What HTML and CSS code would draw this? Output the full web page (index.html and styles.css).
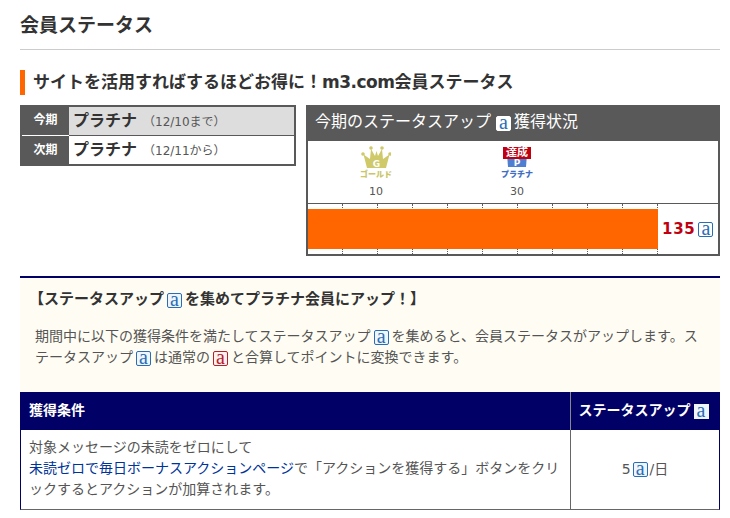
FILE: index.html
```html
<!DOCTYPE html>
<html lang="ja">
<head>
<meta charset="utf-8">
<title>会員ステータス</title>
<link rel="stylesheet" href="styles.css">
</head>
<body>
<main class="page">
  <h1 class="title">会員ステータス</h1>
  <h2 class="subtitle">サイトを活用すればするほどお得に！<span class="latin">m3.com</span>会員ステータス</h2>

  <section class="status-row">
    <div class="periods">
      <div class="period current">
        <div class="period-label">今期</div>
        <div class="period-value"><b>プラチナ</b><span class="period-date">（12/10まで）</span></div>
      </div>
      <div class="period">
        <div class="period-label">次期</div>
        <div class="period-value"><b>プラチナ</b><span class="period-date">（12/11から）</span></div>
      </div>
    </div>

    <div class="progress">
      <div class="progress-head">今期のステータスアップ<span class="a a-head">a</span>獲得状況</div>
      <div class="milestones">
        <div class="milestone">
          <svg class="crown" viewBox="0 0 30 23" aria-hidden="true">
            <g fill="#cfc969">
              <circle cx="2" cy="8" r="1.8"/><circle cx="10" cy="2" r="1.8"/><circle cx="21" cy="2" r="1.8"/><circle cx="29" cy="8" r="1.8"/>
              <path d="M2.5 8.5 L9 13 L10 3 L14 10 L15.5 5 L17 10 L21 3 L22 13 L28.5 8.5 L25 22 L6 22 Z"/>
            </g>
            <text x="15.5" y="20.5" class="crown-letter">G</text>
          </svg>
          <div class="rank rank-gold">ゴールド</div>
          <div class="points">10</div>
        </div>
        <div class="milestone">
          <div class="crown-wrap">
            <svg class="crown" viewBox="0 0 30 23" aria-hidden="true">
              <g fill="#4f7fd0">
                <circle cx="10" cy="1.5" r="1.5"/><circle cx="20" cy="1.5" r="1.5"/>
                <path d="M5 8 L25 8 L24 21 L6 21 Z"/>
              </g>
              <text x="15" y="20" class="crown-letter">P</text>
            </svg>
            <span class="achieved">達成</span>
          </div>
          <div class="rank rank-plat">プラチナ</div>
          <div class="points">30</div>
        </div>
      </div>
      <div class="track">
        <div class="ticks">
          <i></i><i></i><i></i><i></i><i></i><i></i><i></i><i></i><i></i><i></i><i class="tick-last"></i>
        </div>
        <div class="bar-line">
          <div class="bar" style="width:350px"></div>
          <span class="bar-value">135</span><span class="a a-track">a</span>
        </div>
      </div>
    </div>
  </section>

  <section class="info">
    <h3 class="info-head"><span class="bracket">【</span>ステータスアップ<span class="a">a</span>を集めてプラチナ会員にアップ！】</h3>
    <p class="info-text">期間中に以下の獲得条件を満たしてステータスアップ<span class="a">a</span>を集めると、会員ステータスがアップします。ステータスアップ<span class="a">a</span>は通常の<span class="a a-red">a</span>と合算してポイントに変換できます。</p>
  </section>

  <section class="conditions">
    <div class="cond-head cond-main">獲得条件</div>
    <div class="cond-head cond-side">ステータスアップ<span class="a a-th">a</span></div>
    <div class="cond-cell cond-main">対象メッセージの未読をゼロにして<br><a href="#">未読ゼロで毎日ボーナスアクションページ</a>で「アクションを獲得する」ボタンをクリックするとアクションが加算されます。</div>
    <div class="cond-cell cond-side cond-amount">5<span class="a">a</span>/日</div>
  </section>
</main>
</body>
</html>
```
FILE: styles.css
```css
* { box-sizing: border-box; }
html, body { margin: 0; padding: 0; background: #fff; }
body {
  font-family: "DejaVu Sans", "Noto Sans CJK JP", sans-serif;
  font-size: 14px;
  color: #555;
}
.page { width: 730px; padding: 0 10px 0 20px; }

.title {
  margin: 0;
  height: 50px;
  padding-top: 11px;
  font-size: 19px;
  line-height: 28px;
  font-weight: 700;
  color: #333;
  border-bottom: 1px solid #ccc;
}
.subtitle {
  margin: 20px 0 10px;
  height: 25px;
  padding-left: 8px;
  border-left: 5px solid #f60;
  font-size: 17px;
  line-height: 25px;
  font-weight: 700;
  color: #333;
  white-space: nowrap;
}
.latin { letter-spacing: -.5px; }

.status-row { display: flex; align-items: flex-start; gap: 10px; }

.periods { width: 276px; border: 2px solid #595959; }
.period { display: flex; height: 28px; }
.period.current { height: 29px; border-bottom: 1px solid #595959; }
.period-label {
  width: 47px;
  background: #595959;
  color: #fff;
  font-size: 12px;
  font-weight: 700;
  line-height: 28px;
  text-align: center;
}
.period.current .period-label { border-bottom: 1px solid #fff; line-height: 26px; height: 29px; }
.period-value { flex: 1; padding-left: 4px; line-height: 28px; white-space: nowrap; }
.period.current .period-value { background: #ddd; line-height: 27px; }
.period-value b { font-size: 16px; color: #333; }
.period-date { font-size: 12px; color: #555; margin-left: 6px; }

.progress { width: 414px; border: 2px solid #595959; border-top: 0; }
.progress-head {
  margin: 0 -2px;
  height: 36px;
  padding-left: 9px;
  background: #595959;
  color: #fff;
  font-size: 16px;
  line-height: 34px;
}
.milestones {
  display: flex;
  gap: 71px;
  height: 63px;
  padding: 5px 0 0 33px;
  border-bottom: 1px solid #595959;
}
.milestone { width: 70px; text-align: center; }
.crown { display: block; width: 30px; height: 23px; margin: 0 auto; }
.crown-wrap { position: relative; }
.crown-letter { font: 700 9px "DejaVu Sans", sans-serif; fill: #fff; text-anchor: middle; }
.achieved {
  position: absolute;
  left: 21px;
  top: 1px;
  width: 28px;
  height: 12px;
  background: #c00010;
  color: #fff;
  font-size: 11px;
  font-weight: 700;
  line-height: 12px;
}
.rank { font-size: 8px; font-weight: 900; line-height: 12px; white-space: nowrap; }
.rank-gold { color: #c9c568; }
.rank-plat { color: #3f6fc4; }
.points { font-size: 11px; line-height: 22px; color: #555; }

.track { position: relative; height: 50px; }
.ticks { display: flex; height: 100%; }
.ticks i { width: 35px; border-right: 1px dotted #595959; }
.ticks .tick-last { flex: 1; border-right: 0; }
.bar-line { position: absolute; left: 0; top: 5px; right: 0; display: flex; align-items: center; height: 40px; }
.bar { height: 40px; background: #f60; }
.bar-value { margin-left: 4px; font-size: 15px; font-weight: 700; color: #c00010; letter-spacing: .7px; }

.a {
  display: inline-block;
  width: 15px;
  height: 15px;
  margin: 0 3px;
  border: 1px solid #2a6db5;
  border-radius: 2px;
  background: #eef6fc;
  color: #2a6db5;
  font: 400 20px/10px "Liberation Serif", serif;
  text-align: center;
  vertical-align: -2px;
}
.a-head { margin: 0 3px 0 5px; background: #fff; border-color: #fff; }
.a-red { border-color: #b5202a; background: #fdf0f0; color: #b5202a; }
.a-track { background: #fff; margin: 0 0 0 3px; }
.a-th { background: #eef6fc; border-color: #eef6fc; border-radius: 0; margin: 0 0 0 3px; }

.info {
  margin-top: 20px;
  height: 116px;
  padding: 0 15px;
  border-top: 2px solid #006;
  background: #fffdf3;
}
.info-head {
  margin: 0;
  padding-top: 10px;
  font-size: 15px;
  line-height: 22px;
  font-weight: 700;
  color: #333;
}
.bracket { display: inline-block; width: 9px; text-indent: -6px; }
.info-text { margin: 16px 0 0; line-height: 21px; }

.conditions { display: grid; grid-template-columns: 550px 150px; }
.cond-head {
  height: 38px;
  background: #006;
  color: #fff;
  font-weight: 700;
  line-height: 36px;
}
.cond-head.cond-main { padding-left: 9px; }
.cond-head.cond-side { border-left: 1px solid #888; padding-right: 4px; text-align: center; white-space: nowrap; }
.cond-cell { height: 80px; border-bottom: 1px solid #666; line-height: 21px; padding: 7px 8px 0; }
.cond-cell.cond-main { border-left: 1px solid #006; }
.cond-cell.cond-side { border-left: 1px solid #666; border-right: 1px solid #006; }
.cond-amount { display: flex; align-items: center; justify-content: center; padding: 0; }
.cond-amount .a { margin: 0 2px; }
a { color: #039; text-decoration: none; }
```
